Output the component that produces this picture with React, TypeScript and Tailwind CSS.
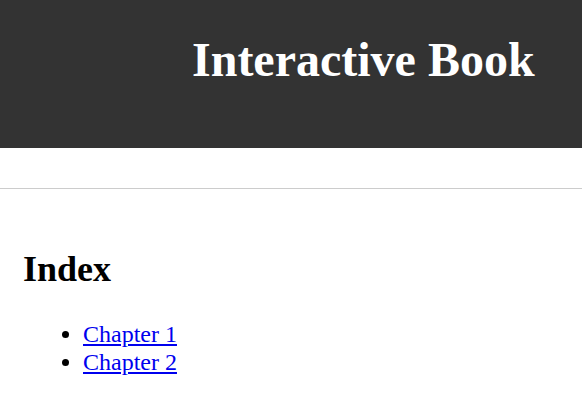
export default function App() {
  return (
    <div className="min-h-screen bg-white font-['Liberation_Serif',serif] text-[24px] text-black">
      <header className="h-[148px] bg-[#333333] pl-[192px] pt-[32px]">
        <h1 className="text-[48px] font-bold leading-[1.15] text-white">
          Interactive Book
        </h1>
      </header>

      <hr className="mt-[40px] border-0 border-t border-[#cccccc]" />

      <main className="px-[23px]">
        <h2 className="mt-[60px] text-[36px] font-bold leading-[1.15]">
          Index
        </h2>
        <ul className="mt-[31px] list-disc pl-[60px] leading-[1.15]">
          <li>
            <a href="#chapter-1" className="text-[#0000ee] underline">
              Chapter 1
            </a>
          </li>
          <li>
            <a href="#chapter-2" className="text-[#0000ee] underline">
              Chapter 2
            </a>
          </li>
        </ul>
      </main>
    </div>
  );
}
